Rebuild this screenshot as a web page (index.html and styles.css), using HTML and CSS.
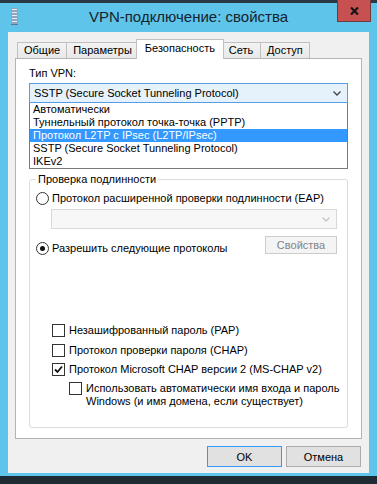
FILE: index.html
```html
<!DOCTYPE html>
<html lang="ru">
<head>
    <meta charset="UTF-8">
    <meta name="viewport" content="width=device-width, initial-scale=1.0">
    <title>VPN-подключение: свойства</title>
    <link rel="stylesheet" href="styles.css">
</head>
<body>
    <div class="window">
        <div class="titlebar">
            <span class="app-icon">
                <svg width="7" height="17" viewBox="0 0 7 17">
                    <rect x="0" y="0" width="7" height="17" fill="#8fa4bd"/>
                    <rect x="1" y="1" width="5" height="1" fill="#e8eef5"/>
                    <rect x="1" y="4" width="5" height="1" fill="#e8eef5"/>
                    <rect x="1" y="7" width="5" height="1" fill="#e8eef5"/>
                    <rect x="1" y="10" width="5" height="1" fill="#e8eef5"/>
                    <rect x="1" y="13" width="5" height="1" fill="#e8eef5"/>
                    <rect x="0" y="16" width="7" height="1" fill="#5d7592"/>
                </svg>
            </span>
            <span class="title">VPN-подключение: свойства</span>
            <span class="close">
                <svg width="9" height="8" viewBox="0 0 9 8">
                    <path d="M1 0.5 L8 7.5 M8 0.5 L1 7.5" stroke="#161616" stroke-width="2.2"/>
                </svg>
            </span>
        </div>

        <div class="client">
            <div class="tabs">
                <div class="tab">Общие</div>
                <div class="tab">Параметры</div>
                <div class="tab active">Безопасность</div>
                <div class="tab">Сеть</div>
                <div class="tab">Доступ</div>
            </div>

            <div class="panel">
                <div class="label">Тип VPN:</div>
                <div class="combo-wrap">
                    <div class="combo open">
                        <span>SSTP (Secure Socket Tunneling Protocol)</span>
                        <svg class="chevron" width="8" height="5" viewBox="0 0 8 5">
                            <path d="M0.5 0.5 L4 4 L7.5 0.5" fill="none" stroke="#444" stroke-width="1.3"/>
                        </svg>
                    </div>
                    <ul class="dropdown">
                        <li>Автоматически</li>
                        <li>Туннельный протокол точка-точка (PPTP)</li>
                        <li class="hot">Протокол L2TP с IPsec (L2TP/IPsec)</li>
                        <li>SSTP (Secure Socket Tunneling Protocol)</li>
                        <li>IKEv2</li>
                    </ul>
                </div>

                <fieldset class="group">
                    <legend>Проверка подлинности</legend>

                    <div class="option">
                        <span class="radio"></span>
                        <span>Протокол расширенной проверки подлинности (EAP)</span>
                    </div>
                    <div class="combo disabled">
                        <span></span>
                        <svg class="chevron" width="8" height="5" viewBox="0 0 8 5">
                            <path d="M0.5 0.5 L4 4 L7.5 0.5" fill="none" stroke="#c4c4c4" stroke-width="1.3"/>
                        </svg>
                    </div>

                    <div class="option-row">
                        <div class="option">
                            <span class="radio checked"></span>
                            <span>Разрешить следующие протоколы</span>
                        </div>
                        <div class="btn disabled">Свойства</div>
                    </div>

                    <div class="checks">
                        <div class="option">
                            <span class="check"></span>
                            <span>Незашифрованный пароль (PAP)</span>
                        </div>
                        <div class="option">
                            <span class="check"></span>
                            <span>Протокол проверки пароля (CHAP)</span>
                        </div>
                        <div class="option">
                            <span class="check">
                                <svg width="11" height="11" viewBox="0 0 11 11">
                                    <path d="M2 5.5 L4.5 8 L9 2.5" fill="none" stroke="#111" stroke-width="1.8"/>
                                </svg>
                            </span>
                            <span>Протокол Microsoft CHAP версии 2 (MS-CHAP v2)</span>
                        </div>
                        <div class="option sub">
                            <span class="check"></span>
                            <span>Использовать автоматически имя входа и пароль<br>Windows (и имя домена, если существует)</span>
                        </div>
                    </div>
                </fieldset>
            </div>

            <div class="actions">
                <div class="btn default">OK</div>
                <div class="btn">Отмена</div>
            </div>
        </div>
    </div>
</body>
</html>
```

FILE: styles.css
```css
html, body { margin: 0; padding: 0; }
body { width: 377px; height: 484px; background: #1f2a33; font-family: "Liberation Sans", Arial, sans-serif; font-size: 11px; color: #000; overflow: hidden; }

.window { height: 476px; background: #5ec4e9; display: flex; flex-direction: column; box-sizing: border-box; border-top: 3px solid #2b3944; }

.titlebar { height: 29px; flex: none; display: grid; grid-template-columns: 1fr auto 1fr; align-items: start; }
.app-icon { padding: 5px 0 0 11px; }
.title { font-size: 15px; color: #16222e; padding-top: 5px; }
.close { justify-self: end; margin: -3px 6px 0 0; width: 32px; height: 21px; background: #c75050; border: 1px solid #6e3a3a; border-top: none; display: flex; align-items: center; justify-content: center; }

.client { flex: 1; min-height: 0; margin: 0 8px 3px; background: #f0f0f0; padding: 7px 7px 6px; display: flex; flex-direction: column; }

.tabs { display: flex; padding-left: 2px; height: 19px; flex: none; align-items: flex-end; position: relative; z-index: 1; }
.tab { height: 16px; line-height: 15px; padding: 0 6px; min-width: 40px; text-align: center; border: 1px solid #c0c0c0; border-bottom: none; margin-left: -1px; background: linear-gradient(#f3f3f3, #e8e8e8); box-sizing: border-box; }
.tab:first-child { margin-left: 0; }
.tab.active { height: 20px; line-height: 17px; padding: 0 8px; margin: 0 -2px -1px -3px; background: #fff; position: relative; }

.panel { flex: 1; background: #fff; border: 1px solid #b4b4b4; padding: 7px 13px 0; display: flex; flex-direction: column; }

.label { line-height: 14px; margin-bottom: 3px; }

.combo-wrap { position: relative; }
.combo { height: 20px; box-sizing: border-box; border: 1px solid #b9b9b9; display: flex; align-items: center; justify-content: space-between; padding: 0 6px 0 4px; }
.combo.open { background: #e5f1fb; border-color: #569de5; }
.combo.disabled { background: #f7f7f7; border-color: #d9d9d9; margin: 4px 0 0 15px; }

.dropdown { position: absolute; left: 0; right: 0; top: 100%; margin: 0; padding: 0; list-style: none; background: #fff; border: 1px solid #7a7a7a; border-top: none; z-index: 2; }
.dropdown li { height: 13px; line-height: 13px; padding-left: 3px; white-space: nowrap; }
.dropdown li.hot { background: #3399ff; color: #fff; }

.group { flex: 1; margin: 69px 0 10px; border: 1px solid #dcdcdc; border-radius: 3px; padding: 5px 10px 0 6px; min-width: 0; }
.group legend { padding: 0 2px; margin-left: 0; line-height: 14px; }

.option { display: flex; align-items: center; line-height: 14px; white-space: nowrap; }
.radio { width: 13px; height: 13px; box-sizing: border-box; border: 1px solid #333; border-radius: 50%; background: #fff; margin-right: 3px; flex: none; display: flex; align-items: center; justify-content: center; }
.radio.checked::after { content: ""; width: 5px; height: 5px; border-radius: 50%; background: #111; }

.option-row { display: flex; justify-content: space-between; align-items: flex-start; margin-top: 7px; }
.option-row .option { margin-top: 5px; }

.checks { margin-top: 68px; padding-left: 16px; }
.checks .option { margin-bottom: 6px; }
.checks .option:nth-child(2) { margin-bottom: 5px; }
.checks .option:last-child { margin-bottom: 0; }
.check { width: 13px; height: 13px; box-sizing: border-box; border: 1px solid #333; background: #fff; margin-right: 4px; flex: none; display: flex; align-items: center; justify-content: center; }
.option.sub { padding-left: 17px; align-items: flex-start; line-height: 13px; }

.btn { height: 21px; width: 75px; box-sizing: border-box; border: 1px solid #adadad; background: #e1e1e1; display: flex; align-items: center; justify-content: center; flex: none; }
.btn.default { border-color: #3399ff; }
.btn.disabled { height: 18px; width: 72px; background: #f4f4f4; border-color: #cccccc; color: #838383; }

.actions { display: flex; justify-content: flex-end; gap: 4px; margin-top: 7px; padding-right: 1px; flex: none; }
```
